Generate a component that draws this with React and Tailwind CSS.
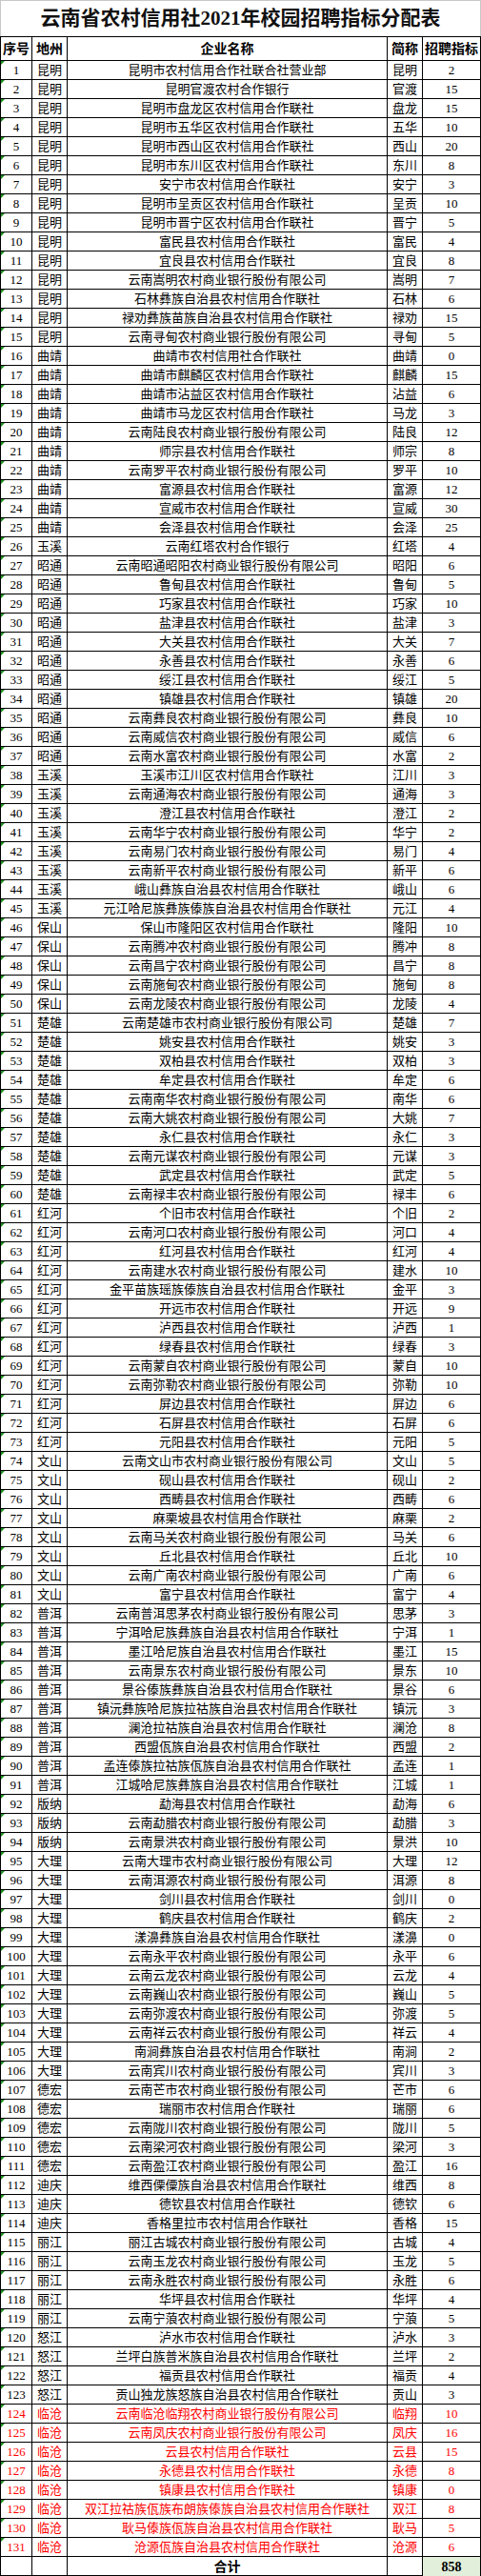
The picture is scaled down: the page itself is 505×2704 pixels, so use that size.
const rows = [
  ["昆明", "昆明市农村信用合作社联合社营业部", "昆明", 2],
  ["昆明", "昆明官渡农村合作银行", "官渡", 15],
  ["昆明", "昆明市盘龙区农村信用合作联社", "盘龙", 15],
  ["昆明", "昆明市五华区农村信用合作联社", "五华", 10],
  ["昆明", "昆明市西山区农村信用合作联社", "西山", 20],
  ["昆明", "昆明市东川区农村信用合作联社", "东川", 8],
  ["昆明", "安宁市农村信用合作联社", "安宁", 3],
  ["昆明", "昆明市呈贡区农村信用合作联社", "呈贡", 10],
  ["昆明", "昆明市晋宁区农村信用合作联社", "晋宁", 5],
  ["昆明", "富民县农村信用合作联社", "富民", 4],
  ["昆明", "宜良县农村信用合作联社", "宜良", 8],
  ["昆明", "云南嵩明农村商业银行股份有限公司", "嵩明", 7],
  ["昆明", "石林彝族自治县农村信用合作联社", "石林", 6],
  ["昆明", "禄劝彝族苗族自治县农村信用合作联社", "禄劝", 15],
  ["昆明", "云南寻甸农村商业银行股份有限公司", "寻甸", 5],
  ["曲靖", "曲靖市农村信用社合作联社", "曲靖", 0],
  ["曲靖", "曲靖市麒麟区农村信用合作联社", "麒麟", 15],
  ["曲靖", "曲靖市沾益区农村信用合作联社", "沾益", 6],
  ["曲靖", "曲靖市马龙区农村信用合作联社", "马龙", 3],
  ["曲靖", "云南陆良农村商业银行股份有限公司", "陆良", 12],
  ["曲靖", "师宗县农村信用合作联社", "师宗", 8],
  ["曲靖", "云南罗平农村商业银行股份有限公司", "罗平", 10],
  ["曲靖", "富源县农村信用合作联社", "富源", 12],
  ["曲靖", "宣威市农村信用合作联社", "宣威", 30],
  ["曲靖", "会泽县农村信用合作联社", "会泽", 25],
  ["玉溪", "云南红塔农村合作银行", "红塔", 4],
  ["昭通", "云南昭通昭阳农村商业银行股份有限公司", "昭阳", 6],
  ["昭通", "鲁甸县农村信用合作联社", "鲁甸", 5],
  ["昭通", "巧家县农村信用合作联社", "巧家", 10],
  ["昭通", "盐津县农村信用合作联社", "盐津", 3],
  ["昭通", "大关县农村信用合作联社", "大关", 7],
  ["昭通", "永善县农村信用合作联社", "永善", 6],
  ["昭通", "绥江县农村信用合作联社", "绥江", 5],
  ["昭通", "镇雄县农村信用合作联社", "镇雄", 20],
  ["昭通", "云南彝良农村商业银行股份有限公司", "彝良", 10],
  ["昭通", "云南威信农村商业银行股份有限公司", "威信", 6],
  ["昭通", "云南水富农村商业银行股份有限公司", "水富", 2],
  ["玉溪", "玉溪市江川区农村信用合作联社", "江川", 3],
  ["玉溪", "云南通海农村商业银行股份有限公司", "通海", 3],
  ["玉溪", "澄江县农村信用合作联社", "澄江", 2],
  ["玉溪", "云南华宁农村商业银行股份有限公司", "华宁", 2],
  ["玉溪", "云南易门农村商业银行股份有限公司", "易门", 4],
  ["玉溪", "云南新平农村商业银行股份有限公司", "新平", 6],
  ["玉溪", "峨山彝族自治县农村信用合作联社", "峨山", 6],
  ["玉溪", "元江哈尼族彝族傣族自治县农村信用合作联社", "元江", 4],
  ["保山", "保山市隆阳区农村信用合作联社", "隆阳", 10],
  ["保山", "云南腾冲农村商业银行股份有限公司", "腾冲", 8],
  ["保山", "云南昌宁农村商业银行股份有限公司", "昌宁", 8],
  ["保山", "云南施甸农村商业银行股份有限公司", "施甸", 8],
  ["保山", "云南龙陵农村商业银行股份有限公司", "龙陵", 4],
  ["楚雄", "云南楚雄市农村商业银行股份有限公司", "楚雄", 7],
  ["楚雄", "姚安县农村信用合作联社", "姚安", 3],
  ["楚雄", "双柏县农村信用合作联社", "双柏", 3],
  ["楚雄", "牟定县农村信用合作联社", "牟定", 6],
  ["楚雄", "云南南华农村商业银行股份有限公司", "南华", 6],
  ["楚雄", "云南大姚农村商业银行股份有限公司", "大姚", 7],
  ["楚雄", "永仁县农村信用合作联社", "永仁", 3],
  ["楚雄", "云南元谋农村商业银行股份有限公司", "元谋", 3],
  ["楚雄", "武定县农村信用合作联社", "武定", 5],
  ["楚雄", "云南禄丰农村商业银行股份有限公司", "禄丰", 6],
  ["红河", "个旧市农村信用合作联社", "个旧", 2],
  ["红河", "云南河口农村商业银行股份有限公司", "河口", 4],
  ["红河", "红河县农村信用合作联社", "红河", 4],
  ["红河", "云南建水农村商业银行股份有限公司", "建水", 10],
  ["红河", "金平苗族瑶族傣族自治县农村信用合作联社", "金平", 3],
  ["红河", "开远市农村信用合作联社", "开远", 9],
  ["红河", "泸西县农村信用合作联社", "泸西", 1],
  ["红河", "绿春县农村信用合作联社", "绿春", 3],
  ["红河", "云南蒙自农村商业银行股份有限公司", "蒙自", 10],
  ["红河", "云南弥勒农村商业银行股份有限公司", "弥勒", 10],
  ["红河", "屏边县农村信用合作联社", "屏边", 6],
  ["红河", "石屏县农村信用合作联社", "石屏", 6],
  ["红河", "元阳县农村信用合作联社", "元阳", 5],
  ["文山", "云南文山市农村商业银行股份有限公司", "文山", 5],
  ["文山", "砚山县农村信用合作联社", "砚山", 2],
  ["文山", "西畴县农村信用合作联社", "西畴", 6],
  ["文山", "麻栗坡县农村信用合作联社", "麻栗", 2],
  ["文山", "云南马关农村商业银行股份有限公司", "马关", 6],
  ["文山", "丘北县农村信用合作联社", "丘北", 10],
  ["文山", "云南广南农村商业银行股份有限公司", "广南", 6],
  ["文山", "富宁县农村信用合作联社", "富宁", 4],
  ["普洱", "云南普洱思茅农村商业银行股份有限公司", "思茅", 3],
  ["普洱", "宁洱哈尼族彝族自治县农村信用合作联社", "宁洱", 1],
  ["普洱", "墨江哈尼族自治县农村信用合作联社", "墨江", 15],
  ["普洱", "云南景东农村商业银行股份有限公司", "景东", 10],
  ["普洱", "景谷傣族彝族自治县农村信用合作联社", "景谷", 6],
  ["普洱", "镇沅彝族哈尼族拉祜族自治县农村信用合作联社", "镇沅", 3],
  ["普洱", "澜沧拉祜族自治县农村信用合作联社", "澜沧", 8],
  ["普洱", "西盟佤族自治县农村信用合作联社", "西盟", 2],
  ["普洱", "孟连傣族拉祜族佤族自治县农村信用合作联社", "孟连", 1],
  ["普洱", "江城哈尼族彝族自治县农村信用合作联社", "江城", 1],
  ["版纳", "勐海县农村信用合作联社", "勐海", 6],
  ["版纳", "云南勐腊农村商业银行股份有限公司", "勐腊", 3],
  ["版纳", "云南景洪农村商业银行股份有限公司", "景洪", 10],
  ["大理", "云南大理市农村商业银行股份有限公司", "大理", 12],
  ["大理", "云南洱源农村商业银行股份有限公司", "洱源", 8],
  ["大理", "剑川县农村信用合作联社", "剑川", 0],
  ["大理", "鹤庆县农村信用合作联社", "鹤庆", 2],
  ["大理", "漾濞彝族自治县农村信用合作联社", "漾濞", 0],
  ["大理", "云南永平农村商业银行股份有限公司", "永平", 6],
  ["大理", "云南云龙农村商业银行股份有限公司", "云龙", 4],
  ["大理", "云南巍山农村商业银行股份有限公司", "巍山", 5],
  ["大理", "云南弥渡农村商业银行股份有限公司", "弥渡", 5],
  ["大理", "云南祥云农村商业银行股份有限公司", "祥云", 4],
  ["大理", "南涧彝族自治县农村信用合作联社", "南涧", 2],
  ["大理", "云南宾川农村商业银行股份有限公司", "宾川", 3],
  ["德宏", "云南芒市农村商业银行股份有限公司", "芒市", 6],
  ["德宏", "瑞丽市农村信用合作联社", "瑞丽", 6],
  ["德宏", "云南陇川农村商业银行股份有限公司", "陇川", 5],
  ["德宏", "云南梁河农村商业银行股份有限公司", "梁河", 3],
  ["德宏", "云南盈江农村商业银行股份有限公司", "盈江", 16],
  ["迪庆", "维西傈僳族自治县农村信用合作联社", "维西", 8],
  ["迪庆", "德钦县农村信用合作联社", "德钦", 6],
  ["迪庆", "香格里拉市农村信用合作联社", "香格", 15],
  ["丽江", "丽江古城农村商业银行股份有限公司", "古城", 4],
  ["丽江", "云南玉龙农村商业银行股份有限公司", "玉龙", 5],
  ["丽江", "云南永胜农村商业银行股份有限公司", "永胜", 6],
  ["丽江", "华坪县农村信用合作联社", "华坪", 4],
  ["丽江", "云南宁蒗农村商业银行股份有限公司", "宁蒗", 5],
  ["怒江", "泸水市农村信用合作联社", "泸水", 3],
  ["怒江", "兰坪白族普米族自治县农村信用合作联社", "兰坪", 2],
  ["怒江", "福贡县农村信用合作联社", "福贡", 4],
  ["怒江", "贡山独龙族怒族自治县农村信用合作联社", "贡山", 3],
  ["临沧", "云南临沧临翔农村商业银行股份有限公司", "临翔", 10],
  ["临沧", "云南凤庆农村商业银行股份有限公司", "凤庆", 16],
  ["临沧", "云县农村信用合作联社", "云县", 15],
  ["临沧", "永德县农村信用合作联社", "永德", 8],
  ["临沧", "镇康县农村信用合作联社", "镇康", 0],
  ["临沧", "双江拉祜族佤族布朗族傣族自治县农村信用合作联社", "双江", 8],
  ["临沧", "耿马傣族佤族自治县农村信用合作联社", "耿马", 5],
  ["临沧", "沧源佤族自治县农村信用合作联社", "沧源", 6],
];

const grid = "grid grid-cols-[33px_37px_336px_37px_60px]";
const cell = "flex items-center justify-center border-r border-black";

function Row({ i, r }) {
  const red = i >= 123;
  return (
    <div className={`${grid} h-[20px] border-b border-black text-[13px] leading-none ${red ? "text-[#ff0000]" : "text-black"}`}>
      <div className={`${cell} relative`}>
        <span className="absolute left-0 top-0 w-0 h-0 border-t-[4px] border-t-[#1f8f1f] border-r-[4px] border-r-transparent" />
        {i + 1}
      </div>
      <div className={cell}>{r[0]}</div>
      <div className={cell}>{r[1]}</div>
      <div className={cell}>{r[2]}</div>
      <div className="flex items-center justify-center">{r[3]}</div>
    </div>
  );
}

export default function App() {
  return (
    <div
      className="w-[505px] bg-white"
      style={{ fontFamily: '"Liberation Serif", "Noto Sans CJK SC", serif' }}
    >
      <div className="h-[38px] flex items-center justify-center border-t border-l border-r border-[#c8c8c8] text-[21px] font-bold text-[#111]">
        云南省农村信用社2021年校园招聘指标分配表
      </div>
      <div className="border-l border-r border-t border-black">
        <div className={`${grid} h-[25px] border-b border-black text-[14px] font-bold`}>
          <div className={cell}>序号</div>
          <div className={cell}>地州</div>
          <div className={cell}>企业名称</div>
          <div className={cell}>简称</div>
          <div className="flex items-center justify-center">招聘指标</div>
        </div>
        {rows.map((r, i) => (
          <Row key={i} i={i} r={r} />
        ))}
        <div className={`${grid} h-[20px] border-b border-black text-[14px] font-bold`}>
          <div className={cell}></div>
          <div className={cell}></div>
          <div className={cell}>合计</div>
          <div className={cell}></div>
          <div className="flex items-center justify-center bg-[#e2efda]">858</div>
        </div>
      </div>
    </div>
  );
}
